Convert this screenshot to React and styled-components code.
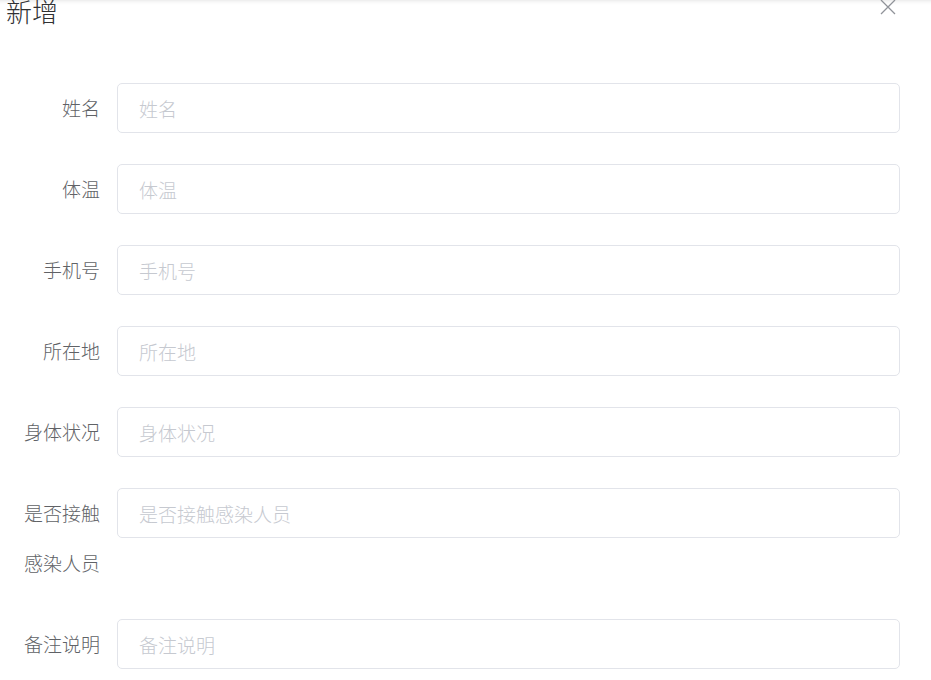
import styled, { createGlobalStyle } from 'styled-components';

const GlobalStyle = createGlobalStyle`
  html, body {
    margin: 0;
    padding: 0;
    background: #fff;
  }
  body {
    font-family: "Noto Sans CJK SC", "Noto Sans", sans-serif;
  }
`;

const Dialog = styled.div`
  width: 931px;
  height: 680px;
  overflow: hidden;
  background: #fff;
  box-shadow: inset 0 5px 5px -5px rgba(0, 0, 0, 0.15);
`;

const Header = styled.div`
  display: flex;
  justify-content: space-between;
  align-items: flex-start;
  height: 52px;
  padding: 0 35px 0 6px;
`;

const Title = styled.span`
  margin-top: -2px;
  font-size: 26px;
  line-height: 26px;
  font-weight: 300;
  color: #303133;
`;

const CloseBtn = styled.button`
  display: flex;
  padding: 0;
  border: none;
  background: transparent;
  cursor: pointer;
`;

const Body = styled.form`
  padding: 31px 31px 0 22px;
`;

const FormItem = styled.div`
  display: flex;
  align-items: flex-start;
  margin-bottom: 31px;
`;

const Label = styled.label`
  box-sizing: border-box;
  flex: 0 0 95px;
  width: 95px;
  padding-right: 17px;
  text-align: right;
  font-size: 19px;
  font-weight: 300;
  line-height: 50px;
  color: #606266;
`;

const Input = styled.input`
  flex: 1;
  box-sizing: border-box;
  height: 50px;
  padding: 0 21px;
  border: 1px solid #e2e4ea;
  border-radius: 5px;
  font-family: inherit;
  font-size: 19px;
  font-weight: 300;
  color: #606266;
  outline: none;

  &::placeholder {
    color: #c6c9d0;
  }
`;

const fields = [
  { id: 'name', label: '姓名' },
  { id: 'temp', label: '体温' },
  { id: 'phone', label: '手机号' },
  { id: 'addr', label: '所在地' },
  { id: 'health', label: '身体状况' },
  { id: 'contact', label: '是否接触感染人员' },
  { id: 'note', label: '备注说明' },
];

function App() {
  return (
    <>
      <GlobalStyle />
      <Dialog>
        <Header>
          <Title>新增</Title>
          <CloseBtn aria-label="close">
            <svg width="16" height="15" viewBox="0 0 16 15">
              <path d="M1 0 L15 14 M15 0 L1 14" stroke="#909399" strokeWidth="1.3" fill="none" />
            </svg>
          </CloseBtn>
        </Header>
        <Body>
          {fields.map(f => (
            <FormItem key={f.id}>
              <Label htmlFor={f.id}>{f.label}</Label>
              <Input id={f.id} placeholder={f.label} />
            </FormItem>
          ))}
        </Body>
      </Dialog>
    </>
  );
}

export default App;
